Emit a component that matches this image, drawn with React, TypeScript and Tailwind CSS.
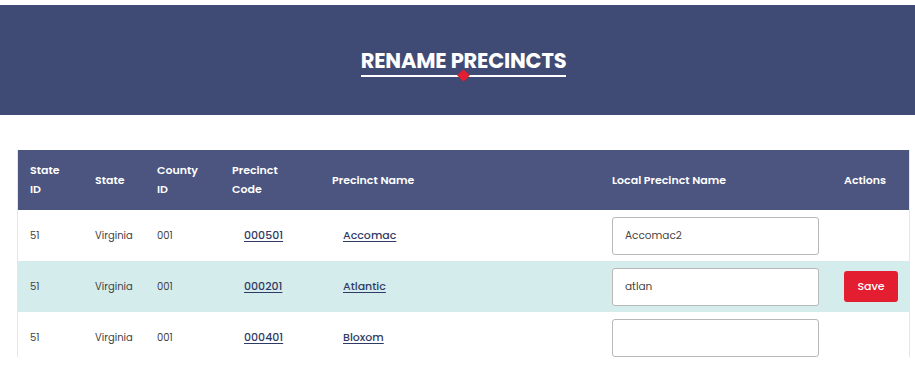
import { useState } from "react";

interface Precinct {
  stateId: string;
  state: string;
  countyId: string;
  code: string;
  name: string;
  local: string;
}

const rows: Precinct[] = [
  { stateId: "51", state: "Virginia", countyId: "001", code: "000501", name: "Accomac", local: "Accomac2" },
  { stateId: "51", state: "Virginia", countyId: "001", code: "000201", name: "Atlantic", local: "atlan" },
  { stateId: "51", state: "Virginia", countyId: "001", code: "000401", name: "Bloxom", local: "" },
];

const font = { fontFamily: '"Poppins", "Inter", "Noto Sans", sans-serif' };

export default function App() {
  const [values, setValues] = useState(rows.map((r) => r.local));
  const active = 1;

  return (
    <div className="w-[915px] h-[377px] overflow-hidden bg-white pt-[5px]" style={font}>
      <div className="h-[110px] bg-[#3f4b74] flex items-center justify-center">
        <div className="relative pb-[6px] mt-[6px] ml-[12px]">
          <h1 className="text-[21px] font-bold text-white tracking-[-0.2px] leading-none">RENAME PRECINCTS</h1>
          <div className="absolute left-0 right-0 bottom-[0px] h-[2px] bg-white" />
          <div className="absolute left-1/2 -ml-[4.5px] -bottom-[3.5px] w-[9px] h-[9px] bg-[#e31e30] rotate-45" />
        </div>
      </div>

      <div className="mt-[35px] ml-[17px] w-[893px] h-[207px] overflow-hidden border-x border-[#e6e6e6]">
        <table className="w-full table-fixed border-collapse text-left">
          <colgroup>
            <col className="w-[65px]" />
            <col className="w-[62px]" />
            <col className="w-[75px]" />
            <col className="w-[100px]" />
            <col className="w-[280px]" />
            <col className="w-[232px]" />
            <col className="w-[79px]" />
          </colgroup>
          <thead>
            <tr className="h-[60px] bg-[#4b5580] text-white text-[11px] font-semibold leading-[19px]">
              <th className="pl-[12px] font-semibold">State<br />ID</th>
              <th className="pl-[12px] font-semibold">State</th>
              <th className="pl-[12px] font-semibold">County<br />ID</th>
              <th className="pl-[12px] font-semibold">Precinct<br />Code</th>
              <th className="pl-[12px] font-semibold">Precinct Name</th>
              <th className="pl-[12px] font-semibold">Local Precinct Name</th>
              <th className="pl-[12px] font-semibold">Actions</th>
            </tr>
          </thead>
          <tbody className="text-[10px] text-[#444]">
            {rows.map((r, i) => (
              <tr key={r.code} className={`h-[51px] ${i === active ? "bg-[#d5ecec]" : "bg-white"}`}>
                <td className="pl-[12px]">{r.stateId}</td>
                <td className="pl-[12px]">{r.state}</td>
                <td className="pl-[12px]">{r.countyId}</td>
                <td className="pl-[24px]">
                  <a href="#" className="text-[11px] font-medium text-[#2f3b66] underline underline-offset-2">{r.code}</a>
                </td>
                <td className="pl-[23px]">
                  <a href="#" className="text-[11px] font-medium text-[#2f3b66] underline underline-offset-2">{r.name}</a>
                </td>
                <td className="pl-[12px]">
                  <input
                    value={values[i]}
                    onChange={(e) => setValues(values.map((v, j) => (j === i ? e.target.value : v)))}
                    className="w-[207px] h-[38px] rounded-[3px] border border-[#b8b8b8] bg-white px-[12px] text-[10.5px] text-[#444] outline-none"
                    style={font}
                  />
                </td>
                <td className="pl-[12px]">
                  {i === active && (
                    <button className="w-[54px] h-[31px] rounded-[3px] bg-[#e31e30] text-white text-[11px] font-medium">
                      Save
                    </button>
                  )}
                </td>
              </tr>
            ))}
          </tbody>
        </table>
      </div>
    </div>
  );
}
